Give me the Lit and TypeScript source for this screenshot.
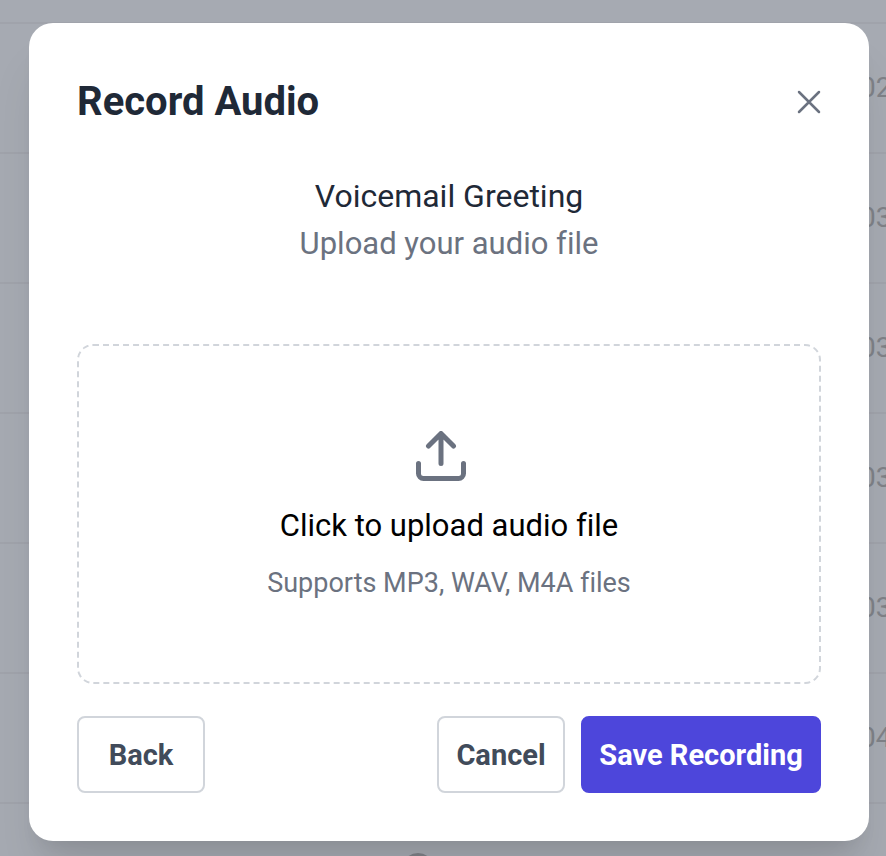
import { LitElement, html, css } from "lit";
import { customElement } from "lit/decorators.js";

@customElement("call-log")
class CallLog extends LitElement {
  static styles = css`
    :host {
      display: block;
      height: 100%;
      overflow: hidden;
      background: #a6aab2;
      font: 28px/32px Roboto, sans-serif;
      color: #7f8288;
    }
    .strip {
      height: 22px;
    }
    .log {
      width: 100%;
      border-collapse: collapse;
      table-layout: fixed;
    }
    .log tr {
      height: 130px;
    }
    .log td {
      box-sizing: border-box;
      padding: 0;
      border-top: 2px solid #a0a3ab;
      text-align: center;
      white-space: nowrap;
    }
    .log .time {
      width: 26px;
      text-align: left;
    }
    .ring {
      display: inline-block;
      width: 32px;
      height: 32px;
      margin-right: 24px;
      vertical-align: middle;
      box-sizing: border-box;
      border: 3px solid #7f8288;
      border-radius: 50%;
    }
  `;
  render() {
    const times = ["02", "03", "03", "03", "03", "04", ""];
    return html`
      <div class="strip"></div>
      <table class="log">
        <tbody>
          ${times.map(
            (t) => html`<tr>
              <td>${t ? "" : html`<span class="ring"></span>`}</td>
              <td class="time">${t}</td>
            </tr>`
          )}
        </tbody>
      </table>
    `;
  }
}

@customElement("app-root")
class AppRoot extends LitElement {
  static styles = css`
    :host {
      display: grid;
      height: 100vh;
      overflow: hidden;
      font-family: Roboto, sans-serif;
      font-variant-ligatures: none;
    }
    .backdrop,
    .overlay {
      grid-area: 1 / 1;
      min-width: 0;
      min-height: 0;
    }
    .overlay {
      z-index: 1;
      padding: 23px 17px 0 29px;
    }
    .dialog {
      box-sizing: border-box;
      max-width: 1024px;
      margin: 0 auto;
      padding: 48px;
      border-radius: 24px;
      background: #fff;
      box-shadow:
        0 40px 50px -10px rgba(0, 0, 0, 0.1),
        0 16px 20px -12px rgba(0, 0, 0, 0.1);
    }
    .head {
      display: flex;
      align-items: center;
      justify-content: space-between;
      height: 61px;
    }
    h2,
    h3,
    p {
      margin: 0;
      font-weight: 400;
    }
    h2 {
      font-size: 40px;
      line-height: 56px;
      font-weight: 700;
      color: #1f2937;
    }
    button {
      font-family: inherit;
      font-variant-ligatures: inherit;
      cursor: pointer;
    }
    .close {
      display: flex;
      padding: 0;
      border: 0;
      background: none;
      color: #6b7280;
    }
    .intro {
      padding: 36px 0 80px;
      text-align: center;
    }
    h3 {
      font-size: 32px;
      line-height: 56px;
      color: #1f2937;
    }
    .intro p {
      font-size: 31px;
      line-height: 40px;
      color: #6b7280;
    }
    .drop {
      display: flex;
      flex-direction: column;
      align-items: center;
      justify-content: center;
      box-sizing: border-box;
      width: 100%;
      min-height: 340px;
      padding: 4px 16px 0;
      border: 2px dashed #d1d5db;
      border-radius: 16px;
      background: none;
    }
    .upload {
      margin-right: 16px;
    }
    .drop strong {
      margin-top: 25px;
      font-size: 31px;
      line-height: 40px;
      font-weight: 400;
      color: #000;
    }
    .drop small {
      margin-top: 19px;
      font-size: 27px;
      line-height: 36px;
      color: #6b7280;
    }
    .foot {
      display: flex;
      gap: 16px;
      margin-top: 32px;
    }
    .btn {
      min-width: 128px;
      height: 77px;
      padding: 0 16px;
      border: 2px solid #d1d5db;
      border-radius: 8px;
      background: #fff;
      font-size: 29px;
      font-weight: 700;
      color: #414b5a;
    }
    .back {
      margin-right: auto;
    }
    .save {
      min-width: 240px;
      border-color: #4d46db;
      background: #4d46db;
      color: #fff;
    }
  `;
  render() {
    return html`
      <call-log class="backdrop" aria-hidden="true"></call-log>
      <div class="overlay">
        <section class="dialog" role="dialog" aria-labelledby="title">
          <header class="head">
            <h2 id="title">Record Audio</h2>
            <button class="close" aria-label="Close">
              <svg width="24" height="24" viewBox="0 0 24 24" fill="none" stroke="currentColor" stroke-width="2.5" stroke-linecap="round">
                <path d="M2 2l20 20M22 2L2 22" />
              </svg>
            </button>
          </header>
          <div class="intro">
            <h3>Voicemail Greeting</h3>
            <p>Upload your audio file</p>
          </div>
          <button class="drop">
            <svg class="upload" width="50" height="50" viewBox="0 0 50 50" fill="none" stroke="#6b7280" stroke-width="5" stroke-linecap="round" stroke-linejoin="round">
              <path d="M25 32.5V2.5M12.5 15L25 2.5L37.5 15M2.5 32.5V42.5A5 5 0 0 0 7.5 47.5H42.5A5 5 0 0 0 47.5 42.5V32.5" />
            </svg>
            <strong>Click to upload audio file</strong>
            <small>Supports MP3, WAV, M4A files</small>
          </button>
          <footer class="foot">
            <button class="btn back">Back</button>
            <button class="btn">Cancel</button>
            <button class="btn save">Save Recording</button>
          </footer>
        </section>
      </div>
    `;
  }
}
